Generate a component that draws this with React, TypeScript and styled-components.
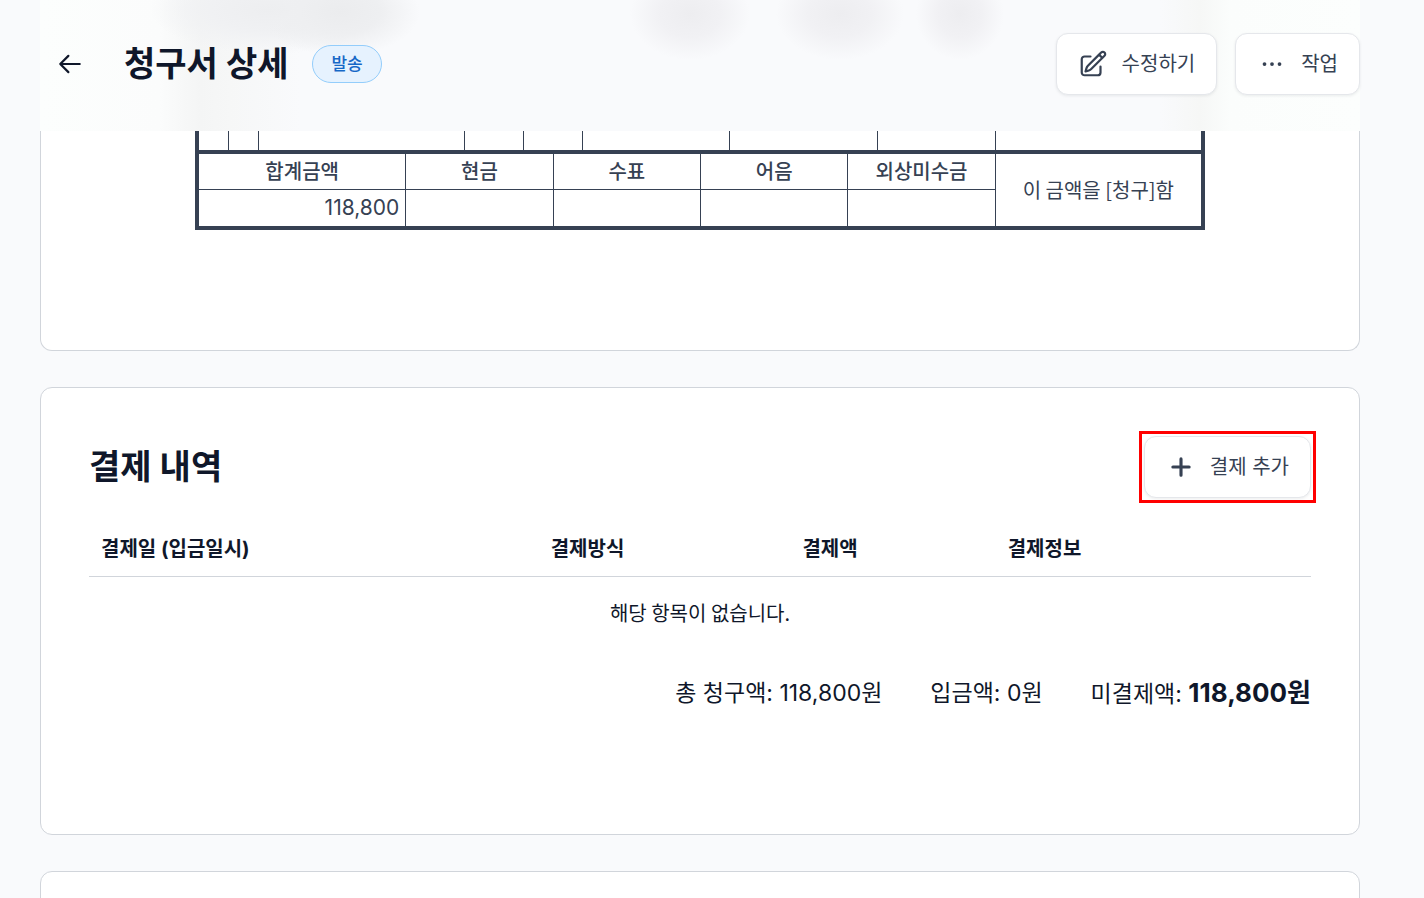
import React from "react";
import styled, { createGlobalStyle } from "styled-components";

const Global = createGlobalStyle`
  *, *::before, *::after { box-sizing: border-box; }
  body {
    margin: 0;
    background: #f9fafc;
    color: #0f172a;
    font-family: Inter, "Noto Sans CJK KR", sans-serif;
    font-size: 20px;
    line-height: 28px;
  }
`;

const Page = styled.main`
  display: flex;
  flex-direction: column;
  gap: 36px;
  height: 100vh;
  overflow: hidden;
  padding: 0 64px 0 40px;
  & > * { flex-shrink: 0; }
`;

const Header = styled.header`
  display: flex;
  align-items: center;
  gap: 24px;
  height: 131px;
  padding: 0 0 3px 17px;
  background:
    radial-gradient(ellipse 60px 46px at 650px 14px, #ededf0 0%, #f1f1f4 50%, transparent 100%) no-repeat,
    radial-gradient(ellipse 64px 46px at 800px 14px, #ededf0 0%, #f1f1f4 50%, transparent 100%) no-repeat,
    radial-gradient(ellipse 44px 46px at 920px 14px, #ededf0 0%, #f1f1f4 50%, transparent 100%) no-repeat,
    radial-gradient(ellipse 80px 44px at 300px 12px, #ebecee 0%, #eeeff1 50%, transparent 100%) no-repeat,
    radial-gradient(ellipse 120px 44px at 230px 10px, #edeef0 0%, #f0f1f3 50%, transparent 100%) no-repeat,
    linear-gradient(90deg, #fcfefd 0, #fbfcfc 120px, #f4f5f5 160px, #f6f7f7 190px, #f9fafc 260px, #f9fafc calc(100% - 200px), #f6f7f6 calc(100% - 160px), #fbfdfc calc(100% - 130px), #fcfefd 100%);
`;

const BackLink = styled.a`
  display: flex;
  color: #0f172a;
`;

const Title = styled.h1`
  margin: 0 0 0 17px;
  font-size: 34px;
  line-height: 44px;
  font-weight: 700;
`;

const Badge = styled.span`
  padding: 4px 18px;
  border: 1px solid #93cdfb;
  border-radius: 20px;
  background: #e6f2fe;
  color: #1668c7;
  font-size: 17px;
  font-weight: 500;
`;

const Actions = styled.div`
  display: flex;
  gap: 18px;
  margin-left: auto;
`;

const Button = styled.button`
  display: flex;
  align-items: center;
  gap: 14px;
  height: 62px;
  padding: 0 21px;
  border: 1px solid #e5e7eb;
  border-radius: 12px;
  background: #fff;
  box-shadow: 0 1px 3px rgba(15, 23, 42, 0.08);
  color: #364153;
  font: inherit;
  cursor: pointer;
`;

const Card = styled.section<{ $attached?: boolean }>`
  padding: 48px;
  border: 1px solid #d1d5db;
  border-radius: 12px;
  background: #fff;
  ${(p) => p.$attached && "padding: 0 48px 120px; border-top: 0; border-radius: 0 0 12px 12px;"}
`;

const Top = styled.div``;

const InvoiceTable = styled.table`
  width: 100%;
  max-width: 1010px;
  margin: 0 auto;
  table-layout: fixed;
  border-collapse: separate;
  border-spacing: 0;
  border: 4px solid #364153;
  border-top: 0;
  color: #364153;
`;

const ItemCell = styled.td`
  height: 19px;
  padding: 0;
  & + & { border-left: 1px solid #364153; }
`;

const SumHead = styled.th`
  height: 39px;
  padding: 0 6px;
  border-top: 4px solid #364153;
  font-weight: 500;
  & + & { border-left: 1px solid #364153; }
`;

const SumNote = styled.td`
  padding: 0;
  border-top: 4px solid #364153;
  border-left: 1px solid #364153;
  font-family: "Noto Sans CJK KR", sans-serif;
  text-align: center;
`;

const SumCell = styled.td`
  height: 37px;
  padding: 0 6px;
  border-top: 1px solid #364153;
  font-size: 21px;
  text-align: right;
  & + & { border-left: 1px solid #364153; }
`;

const CardHead = styled.div`
  display: flex;
  align-items: center;
  justify-content: space-between;
`;

const Heading = styled.h2`
  margin: 0;
  font-size: 34px;
  line-height: 44px;
  font-weight: 700;
`;

const Highlight = styled.div`
  outline: 3px solid #ff0000;
  outline-offset: 2px;
`;

const PayTable = styled.table`
  width: 100%;
  margin-top: 24px;
  table-layout: fixed;
  border-collapse: collapse;
`;

const PayHead = styled.th`
  height: 54px;
  padding: 0 12px;
  border-bottom: 1px solid #d1d5db;
  font-weight: 700;
  text-align: left;
`;

const Empty = styled.td`
  height: 73px;
  padding: 0;
  font-family: "Noto Sans CJK KR", sans-serif;
  text-align: center;
`;

const Totals = styled.div`
  display: flex;
  justify-content: flex-end;
  gap: 48px;
  margin: 24px 0 72px;
  font-size: 23px;
  line-height: 40px;

  strong { font-size: 26px; }
`;

const itemSpans = [1, 1, 7, 2, 2, 5, 5, 4, 7];
const sums = [
  { label: "합계금액", span: 7, value: "118,800" },
  { label: "현금", span: 5, value: "" },
  { label: "수표", span: 5, value: "" },
  { label: "어음", span: 5, value: "" },
  { label: "외상미수금", span: 5, value: "" },
];

type IconProps = { d: string; size: number; weight?: number };

const Icon = ({ d, size, weight = 2 }: IconProps) => (
  <svg width={size} height={size} viewBox="0 0 24 24" fill="none" stroke="currentColor" strokeWidth={weight} strokeLinecap="round" strokeLinejoin="round" aria-hidden="true">
    <path d={d} />
  </svg>
);

const arrow = "M10.5 19.5 3 12m0 0 7.5-7.5M3 12h18";
const pencil =
  "m16.862 4.487 1.687-1.688a1.875 1.875 0 1 1 2.652 2.652L10.582 16.07a4.5 4.5 0 0 1-1.897 1.13L6 18l.8-2.685a4.5 4.5 0 0 1 1.13-1.897l8.932-8.931Zm0 0L19.5 7.125M18 14v4.75A2.25 2.25 0 0 1 15.75 21H5.25A2.25 2.25 0 0 1 3 18.75V8.25A2.25 2.25 0 0 1 5.25 6H10";
const dots = "M6 12h.01M12 12h.01M18 12h.01";
const plus = "M12 5.5v13M5.5 12h13";

export default function App() {
  return (
    <>
      <Global />
      <Page>
        <Top>
          <Header>
            <BackLink href="#" aria-label="뒤로"><Icon d={arrow} size={26} /></BackLink>
            <Title>청구서 상세</Title>
            <Badge>발송</Badge>
            <Actions>
              <Button type="button"><Icon d={pencil} size={30} weight={1.75} />수정하기</Button>
              <Button type="button"><Icon d={dots} size={30} weight={3} />작업</Button>
            </Actions>
          </Header>
          <Card $attached>
            <InvoiceTable>
              <colgroup>{Array.from({ length: 34 }, (_, i) => <col key={i} />)}</colgroup>
              <tbody>
                <tr>{itemSpans.map((span, i) => <ItemCell key={i} colSpan={span} />)}</tr>
                <tr>
                  {sums.map((s) => <SumHead key={s.label} colSpan={s.span}>{s.label}</SumHead>)}
                  <SumNote colSpan={7} rowSpan={2}>이 금액을 [청구]함</SumNote>
                </tr>
                <tr>{sums.map((s) => <SumCell key={s.label} colSpan={s.span}>{s.value}</SumCell>)}</tr>
              </tbody>
            </InvoiceTable>
          </Card>
        </Top>

        <Card>
          <CardHead>
            <Heading>결제 내역</Heading>
            <Highlight><Button type="button"><Icon d={plus} size={30} weight={2.5} />결제 추가</Button></Highlight>
          </CardHead>
          <PayTable>
            <colgroup>
              <col style={{ width: "36.8%" }} />
              <col style={{ width: "20.6%" }} />
              <col style={{ width: "16.8%" }} />
              <col />
            </colgroup>
            <thead>
              <tr>
                <PayHead>결제일 (입금일시)</PayHead>
                <PayHead>결제방식</PayHead>
                <PayHead>결제액</PayHead>
                <PayHead>결제정보</PayHead>
              </tr>
            </thead>
            <tbody><tr><Empty colSpan={4}>해당 항목이 없습니다.</Empty></tr></tbody>
          </PayTable>
          <Totals>
            <span>총 청구액: 118,800원</span>
            <span>입금액: 0원</span>
            <span>미결제액: <strong>118,800원</strong></span>
          </Totals>
        </Card>
        <Card />
      </Page>
    </>
  );
}
